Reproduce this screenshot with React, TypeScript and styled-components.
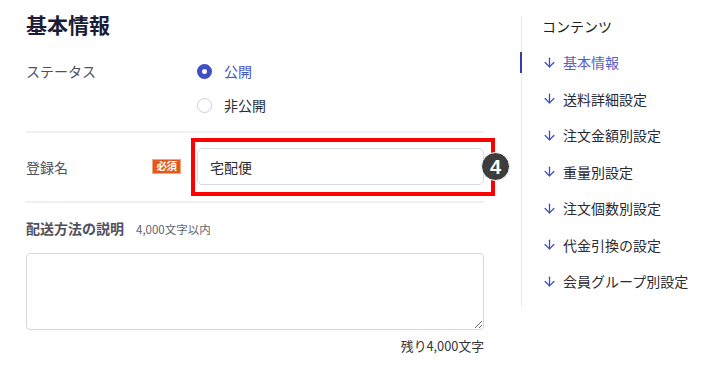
import React, { useState } from 'react';
import styled, { createGlobalStyle } from 'styled-components';
import { ArrowDown } from 'lucide-react';

const GlobalStyle = createGlobalStyle`
  html, body {
    margin: 0;
    padding: 0;
    background: #ffffff;
  }
  body {
    font-family: "Noto Sans CJK JP", "Noto Sans", sans-serif;
    color: #333333;
  }
`;

const Page = styled.div`
  display: flex;
  align-items: flex-start;
  padding-left: 26px;
  width: 706px;
  height: 368px;
  box-sizing: border-box;
`;

const Main = styled.main`
  width: 458px;
  padding-top: 10px;
`;

const Title = styled.h2`
  margin: 0 0 16px;
  font-size: 21px;
  line-height: 28px;
  font-weight: 700;
  color: #1b1d36;
`;

const Section = styled.div<{ $pt?: number; $pb?: number }>`
  display: flex;
  align-items: flex-start;
  padding-top: ${(p) => p.$pt ?? 0}px;
  padding-bottom: ${(p) => p.$pb ?? 0}px;
  border-bottom: 2px solid #eef0f5;
`;

const Row = styled.div<{ $pt?: number; $pb?: number }>`
  display: flex;
  align-items: center;
  padding-top: ${(p) => p.$pt ?? 0}px;
  padding-bottom: ${(p) => p.$pb ?? 0}px;
  border-bottom: 2px solid #eef0f5;
`;

const LabelCell = styled.div<{ $lh?: number }>`
  width: 171px;
  flex: none;
  display: flex;
  align-items: center;
  justify-content: space-between;
  padding-right: 16px;
  box-sizing: border-box;
  line-height: ${(p) => p.$lh ?? 20}px;
`;

const Label = styled.span`
  font-size: 14px;
  color: #4f515e;
`;

const Required = styled.span`
  display: inline-flex;
  align-items: center;
  justify-content: center;
  width: 29px;
  height: 15px;
  background: #e2581c;
  border: 1px solid #f2a57f;
  box-sizing: border-box;
  color: #ffffff;
  font-size: 10.5px;
  font-weight: 700;
  line-height: 1;
  letter-spacing: -0.5px;
`;

const RadioGroup = styled.div`
  display: flex;
  flex-direction: column;
`;

const RadioOption = styled.label<{ $checked: boolean }>`
  display: flex;
  align-items: center;
  gap: 12px;
  height: 34px;
  font-size: 14px;
  cursor: pointer;
  color: ${(p) => (p.$checked ? '#4b55c3' : '#2e2e36')};
`;

const RadioDot = styled.span<{ $checked: boolean }>`
  width: 15px;
  height: 15px;
  border-radius: 50%;
  box-sizing: border-box;
  flex: none;
  background: #ffffff;
  border: ${(p) => (p.$checked ? '5px solid #3f4fc4' : '1.5px solid #c9cfdc')};
`;

const FieldWrap = styled.div`
  position: relative;
  width: 287px;
`;

const TextInput = styled.input`
  display: block;
  width: 100%;
  height: 37px;
  box-sizing: border-box;
  padding: 0 12px;
  border: 1.5px solid #d6dbe7;
  border-radius: 5px;
  font-family: inherit;
  font-size: 14px;
  color: #2b2b33;
  outline: none;
`;

const Highlight = styled.div`
  position: absolute;
  top: -10px;
  left: -6px;
  right: -11px;
  bottom: -11px;
  border: 4px solid #ff0000;
  pointer-events: none;
`;

const StepBadge = styled.span`
  position: absolute;
  right: -26px;
  top: 4px;
  width: 27px;
  height: 27px;
  border-radius: 50%;
  background: #3d3d3d;
  border: 1px solid #ffffff;
  color: #ffffff;
  font-family: "Liberation Sans", "Noto Sans", sans-serif;
  font-weight: 700;
  font-size: 20px;
  display: flex;
  align-items: center;
  justify-content: center;
  line-height: 1;
`;

const DescHead = styled.div`
  display: flex;
  align-items: baseline;
  gap: 12px;
  padding-top: 15px;
  line-height: 20px;
`;

const DescLabel = styled.span`
  font-size: 14px;
  font-weight: 700;
  color: #4f515e;
`;

const Hint = styled.span`
  font-size: 11.5px;
  color: #62646f;
`;

const TextArea = styled.textarea`
  display: block;
  width: 100%;
  height: 77px;
  margin-top: 14px;
  box-sizing: border-box;
  border: 1.5px solid #d3d8e4;
  border-radius: 4px;
  font-family: inherit;
  font-size: 14px;
  padding: 8px 12px;
  outline: none;
`;

const Counter = styled.div`
  margin-top: 7px;
  text-align: right;
  font-size: 12.8px;
  line-height: 18px;
  color: #34343c;
`;

const Aside = styled.nav`
  margin-left: 37px;
  margin-top: 16px;
  height: 291px;
  border-left: 1px solid #e8eaf1;
  padding-left: 20px;
  box-sizing: border-box;
  width: 170px;
`;

const AsideTitle = styled.div`
  font-size: 14px;
  line-height: 20px;
  color: #1d1d26;
`;

const NavList = styled.ul`
  list-style: none;
  margin: 8px 0 0;
  padding: 0;
`;

const NavItem = styled.li<{ $active?: boolean }>`
  position: relative;
  display: flex;
  align-items: center;
  gap: 6px;
  height: 36.5px;
  font-size: 14px;
  color: ${(p) => (p.$active ? '#5661c8' : '#2a2a33')};
  white-space: nowrap;

  svg {
    color: #3b4bc0;
    flex: none;
  }

  &::before {
    content: '';
    display: ${(p) => (p.$active ? 'block' : 'none')};
    position: absolute;
    left: -22px;
    top: 8px;
    width: 2px;
    height: 21px;
    background: #2f3fae;
  }
`;

const navItems = [
  '基本情報',
  '送料詳細設定',
  '注文金額別設定',
  '重量別設定',
  '注文個数別設定',
  '代金引換の設定',
  '会員グループ別設定',
];

export default function App() {
  const [status, setStatus] = useState<'public' | 'private'>('public');
  const [name, setName] = useState('宅配便');
  const [desc, setDesc] = useState('');

  return (
    <>
      <GlobalStyle />
      <Page>
        <Main>
          <Title>基本情報</Title>
          <Section $pb={9}>
            <LabelCell $lh={34}>
              <Label>ステータス</Label>
            </LabelCell>
            <RadioGroup>
              <RadioOption $checked={status === 'public'} onClick={() => setStatus('public')}>
                <RadioDot $checked={status === 'public'} />
                公開
              </RadioOption>
              <RadioOption $checked={status === 'private'} onClick={() => setStatus('private')}>
                <RadioDot $checked={status === 'private'} />
                非公開
              </RadioOption>
            </RadioGroup>
          </Section>
          <Row $pt={15} $pb={16}>
            <LabelCell>
              <Label>登録名</Label>
              <Required>必須</Required>
            </LabelCell>
            <FieldWrap>
              <TextInput value={name} onChange={(e) => setName(e.target.value)} />
              <Highlight />
              <StepBadge>4</StepBadge>
            </FieldWrap>
          </Row>
          <DescHead>
            <DescLabel>配送方法の説明</DescLabel>
            <Hint>4,000文字以内</Hint>
          </DescHead>
          <TextArea value={desc} onChange={(e) => setDesc(e.target.value)} />
          <Counter>残り{(4000 - desc.length).toLocaleString()}文字</Counter>
        </Main>
        <Aside>
          <AsideTitle>コンテンツ</AsideTitle>
          <NavList>
            {navItems.map((item, i) => (
              <NavItem key={item} $active={i === 0}>
                <ArrowDown size={15} strokeWidth={2} />
                {item}
              </NavItem>
            ))}
          </NavList>
        </Aside>
      </Page>
    </>
  );
}
